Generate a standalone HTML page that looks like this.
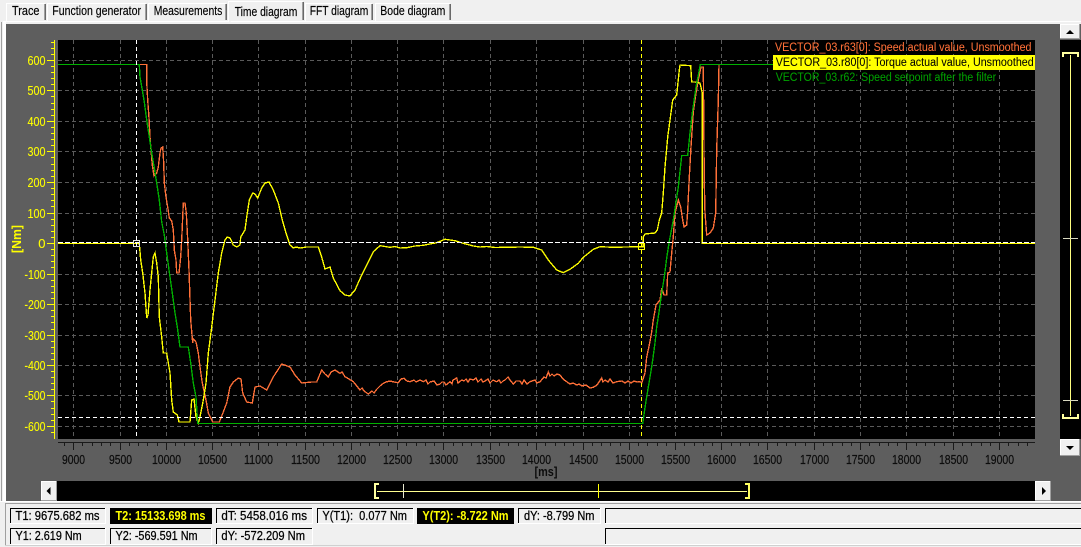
<!DOCTYPE html>
<html><head><meta charset="utf-8"><title>Time diagram</title>
<style>
html,body{margin:0;padding:0;background:#f0f0f0;overflow:hidden}
svg{display:block;font-family:"Liberation Sans",sans-serif}
text{font-size:12.5px;fill:#000;stroke:#000;stroke-width:.15}
.yl{fill:#ffff00;stroke:#ffff00;stroke-width:.1;text-anchor:end;font-size:13px}
.xl{fill:#0c0c0c;stroke:#0c0c0c;stroke-width:.2;text-anchor:middle;font-size:12.5px}
.st{fill:#000;stroke:#000;stroke-width:.25;font-size:12.5px}
.sy{fill:#ffff00;stroke:none;font-size:12.5px;font-weight:bold}
.lg{font-size:11.5px;stroke-width:.05}
</style></head><body>
<svg width="1081" height="547" viewBox="0 0 1081 547" xmlns="http://www.w3.org/2000/svg">
<rect width="1081" height="547" fill="#f0f0f0"/>
<!-- pane frame -->
<rect x="3" y="21" width="1078" height="1" fill="#ffffff"/>
<rect x="1" y="22" width="1" height="480" fill="#a0a0a0"/>
<rect x="3" y="22" width="3" height="480" fill="#ffffff"/>
<!-- tabs -->
<g shape-rendering="crispEdges">
<path d="M6.5 21V3.5H45" fill="#f0f0f0" stroke="#ffffff"/><path d="M44.5 4V20" stroke="#a0a0a0"/><path d="M45.5 4V20" stroke="#696969"/>
<path d="M47.5 21V3.5H146" fill="#f0f0f0" stroke="#ffffff"/><path d="M145.5 4V20" stroke="#a0a0a0"/><path d="M146.5 4V20" stroke="#696969"/>
<path d="M148.5 21V3.5H226" fill="#f0f0f0" stroke="#ffffff"/><path d="M225.5 4V20" stroke="#a0a0a0"/><path d="M226.5 4V20" stroke="#696969"/>
<path d="M305.5 21V3.5H372" fill="#f0f0f0" stroke="#ffffff"/><path d="M371.5 4V20" stroke="#a0a0a0"/><path d="M372.5 4V20" stroke="#696969"/>
<path d="M375.5 21V3.5H450" fill="#f0f0f0" stroke="#ffffff"/><path d="M449.5 4V20" stroke="#a0a0a0"/><path d="M450.5 4V20" stroke="#696969"/>
<path d="M228.5 22V1.5H303" fill="#f0f0f0" stroke="#ffffff"/><path d="M302.5 2V20" stroke="#a0a0a0"/><path d="M303.5 2V20" stroke="#696969"/>
</g>
<g>
<text x="12" y="15" textLength="27.5" lengthAdjust="spacingAndGlyphs">Trace</text>
<text x="52.3" y="15" textLength="88.7" lengthAdjust="spacingAndGlyphs">Function generator</text>
<text x="153.7" y="15" textLength="68.6" lengthAdjust="spacingAndGlyphs">Measurements</text>
<text x="234.7" y="16" textLength="62.6" lengthAdjust="spacingAndGlyphs">Time diagram</text>
<text x="309.7" y="15" textLength="58.6" lengthAdjust="spacingAndGlyphs">FFT diagram</text>
<text x="380.3" y="15" textLength="65" lengthAdjust="spacingAndGlyphs">Bode diagram</text>
</g>
<!-- gray panel -->
<rect x="6" y="24" width="1075" height="477" fill="#5e5e5e"/>
<!-- plot -->
<rect x="58" y="40" width="977" height="399" fill="#000"/>
<!-- grid -->
<g stroke="#5a5a5a" stroke-width="1" stroke-dasharray="4 3" shape-rendering="crispEdges" fill="none">
<path d="M58 60.5H1035M58 90.5H1035M58 121.5H1035M58 151.5H1035M58 182.5H1035M58 213.5H1035M58 274.5H1035M58 304.5H1035M58 335.5H1035M58 365.5H1035M58 395.5H1035M58 426.5H1035"/>
<path d="M73.5 40V439M120.5 40V439M166.5 40V439M212.5 40V439M258.5 40V439M305.5 40V439M351.5 40V439M397.5 40V439M443.5 40V439M490.5 40V439M536.5 40V439M583.5 40V439M629.5 40V439M675.5 40V439M721.5 40V439M767.5 40V439M814.5 40V439M860.5 40V439M906.5 40V439M953.5 40V439M999.5 40V439"/>
</g>
<!-- y axis -->
<path d="M54.5 40V439" stroke="#ffff00" shape-rendering="crispEdges"/>
<path d="M47 60.5H54M47 90.5H54M47 121.5H54M47 151.5H54M47 182.5H54M47 213.5H54M47 243.5H54M47 274.5H54M47 304.5H54M47 335.5H54M47 365.5H54M47 395.5H54M47 426.5H54" stroke="#ffff00" shape-rendering="crispEdges"/>
<path d="M51 42.5H54M51 48.5H54M51 54.5H54M51 66.5H54M51 72.5H54M51 78.5H54M51 84.5H54M51 96.5H54M51 103.5H54M51 109.5H54M51 115.5H54M51 127.5H54M51 133.5H54M51 139.5H54M51 145.5H54M51 157.5H54M51 164.5H54M51 170.5H54M51 176.5H54M51 188.5H54M51 194.5H54M51 200.5H54M51 206.5H54M51 219.5H54M51 225.5H54M51 231.5H54M51 237.5H54M51 249.5H54M51 255.5H54M51 261.5H54M51 267.5H54M51 280.5H54M51 286.5H54M51 292.5H54M51 298.5H54M51 310.5H54M51 316.5H54M51 322.5H54M51 329.5H54M51 341.5H54M51 347.5H54M51 353.5H54M51 359.5H54M51 371.5H54M51 377.5H54M51 383.5H54M51 389.5H54M51 401.5H54M51 408.5H54M51 414.5H54M51 420.5H54M51 432.5H54" stroke="#ffff00" shape-rendering="crispEdges"/>
<g>
<text class="yl" x="45.5" y="65" textLength="18" lengthAdjust="spacingAndGlyphs">600</text>
<text class="yl" x="45.5" y="95" textLength="18" lengthAdjust="spacingAndGlyphs">500</text>
<text class="yl" x="45.5" y="126" textLength="18" lengthAdjust="spacingAndGlyphs">400</text>
<text class="yl" x="45.5" y="156" textLength="18" lengthAdjust="spacingAndGlyphs">300</text>
<text class="yl" x="45.5" y="187" textLength="18" lengthAdjust="spacingAndGlyphs">200</text>
<text class="yl" x="45.5" y="218" textLength="18" lengthAdjust="spacingAndGlyphs">100</text>
<text class="yl" x="45.5" y="248">0</text>
<text class="yl" x="45.5" y="279" textLength="21" lengthAdjust="spacingAndGlyphs">-100</text>
<text class="yl" x="45.5" y="309" textLength="21" lengthAdjust="spacingAndGlyphs">-200</text>
<text class="yl" x="45.5" y="340" textLength="21" lengthAdjust="spacingAndGlyphs">-300</text>
<text class="yl" x="45.5" y="370" textLength="21" lengthAdjust="spacingAndGlyphs">-400</text>
<text class="yl" x="45.5" y="400" textLength="21" lengthAdjust="spacingAndGlyphs">-500</text>
<text class="yl" x="45.5" y="431" textLength="21" lengthAdjust="spacingAndGlyphs">-600</text>
<text transform="translate(21 253) rotate(-90)" style="fill:#ffff00;stroke:none;font-weight:bold;font-size:13px" textLength="28" lengthAdjust="spacingAndGlyphs">[Nm]</text>
</g>
<!-- x axis -->
<path d="M58 442.5H1035" stroke="#1a1a1a" stroke-width="1.4" shape-rendering="crispEdges"/>
<path d="M73.5 443V450M120.5 443V450M166.5 443V450M212.5 443V450M258.5 443V450M305.5 443V450M351.5 443V450M397.5 443V450M443.5 443V450M490.5 443V450M536.5 443V450M583.5 443V450M629.5 443V450M675.5 443V450M721.5 443V450M767.5 443V450M814.5 443V450M860.5 443V450M906.5 443V450M953.5 443V450M999.5 443V450" stroke="#1a1a1a" shape-rendering="crispEdges"/>
<path d="M64.5 443V446M82.5 443V446M92.5 443V446M101.5 443V446M110.5 443V446M129.5 443V446M138.5 443V446M147.5 443V446M157.5 443V446M175.5 443V446M184.5 443V446M194.5 443V446M203.5 443V446M221.5 443V446M231.5 443V446M240.5 443V446M249.5 443V446M268.5 443V446M277.5 443V446M286.5 443V446M296.5 443V446M314.5 443V446M323.5 443V446M333.5 443V446M342.5 443V446M360.5 443V446M369.5 443V446M379.5 443V446M388.5 443V446M406.5 443V446M416.5 443V446M425.5 443V446M434.5 443V446M453.5 443V446M462.5 443V446M471.5 443V446M481.5 443V446M499.5 443V446M508.5 443V446M518.5 443V446M527.5 443V446M545.5 443V446M555.5 443V446M564.5 443V446M573.5 443V446M592.5 443V446M601.5 443V446M610.5 443V446M620.5 443V446M638.5 443V446M647.5 443V446M657.5 443V446M666.5 443V446M684.5 443V446M694.5 443V446M703.5 443V446M712.5 443V446M731.5 443V446M740.5 443V446M749.5 443V446M758.5 443V446M777.5 443V446M786.5 443V446M795.5 443V446M805.5 443V446M823.5 443V446M832.5 443V446M842.5 443V446M851.5 443V446M869.5 443V446M879.5 443V446M888.5 443V446M897.5 443V446M916.5 443V446M925.5 443V446M934.5 443V446M944.5 443V446M962.5 443V446M971.5 443V446M981.5 443V446M990.5 443V446M1008.5 443V446M1018.5 443V446M1027.5 443V446" stroke="#1a1a1a" shape-rendering="crispEdges"/>
<g>
<text class="xl" x="73.5" y="464" textLength="23" lengthAdjust="spacingAndGlyphs">9000</text>
<text class="xl" x="120.5" y="464" textLength="23" lengthAdjust="spacingAndGlyphs">9500</text>
<text class="xl" x="166.5" y="464" textLength="29" lengthAdjust="spacingAndGlyphs">10000</text>
<text class="xl" x="212.5" y="464" textLength="29" lengthAdjust="spacingAndGlyphs">10500</text>
<text class="xl" x="258.5" y="464" textLength="29" lengthAdjust="spacingAndGlyphs">11000</text>
<text class="xl" x="305.5" y="464" textLength="29" lengthAdjust="spacingAndGlyphs">11500</text>
<text class="xl" x="351.5" y="464" textLength="29" lengthAdjust="spacingAndGlyphs">12000</text>
<text class="xl" x="397.5" y="464" textLength="29" lengthAdjust="spacingAndGlyphs">12500</text>
<text class="xl" x="443.5" y="464" textLength="29" lengthAdjust="spacingAndGlyphs">13000</text>
<text class="xl" x="490.5" y="464" textLength="29" lengthAdjust="spacingAndGlyphs">13500</text>
<text class="xl" x="536.5" y="464" textLength="29" lengthAdjust="spacingAndGlyphs">14000</text>
<text class="xl" x="583.5" y="464" textLength="29" lengthAdjust="spacingAndGlyphs">14500</text>
<text class="xl" x="629.5" y="464" textLength="29" lengthAdjust="spacingAndGlyphs">15000</text>
<text class="xl" x="675.5" y="464" textLength="29" lengthAdjust="spacingAndGlyphs">15500</text>
<text class="xl" x="721.5" y="464" textLength="29" lengthAdjust="spacingAndGlyphs">16000</text>
<text class="xl" x="767.5" y="464" textLength="29" lengthAdjust="spacingAndGlyphs">16500</text>
<text class="xl" x="814.5" y="464" textLength="29" lengthAdjust="spacingAndGlyphs">17000</text>
<text class="xl" x="860.5" y="464" textLength="29" lengthAdjust="spacingAndGlyphs">17500</text>
<text class="xl" x="906.5" y="464" textLength="29" lengthAdjust="spacingAndGlyphs">18000</text>
<text class="xl" x="953.5" y="464" textLength="29" lengthAdjust="spacingAndGlyphs">18500</text>
<text class="xl" x="999.5" y="464" textLength="29" lengthAdjust="spacingAndGlyphs">19000</text>
<text class="xl" x="546" y="476" style="font-weight:bold;stroke:none" textLength="23" lengthAdjust="spacingAndGlyphs">[ms]</text>
</g>
<!-- traces -->
<g fill="none" stroke-width="1.35" stroke-linejoin="miter" shape-rendering="crispEdges">
<polyline stroke="#ff7038" points="139,64.5 146.7,64.5 146.7,82 147.7,100 149,118 150,137 151,150 152.3,165 154,176 156.7,173 158.3,167 160,153 161,148 162.7,147 163.7,163 164.3,183 166,197 167.7,207 169.3,218 171.7,221 173.3,230 174.3,250 176,260 176.7,273 179,273 180.7,257 181.7,240 183.3,203 185,203 186.3,213 187.7,240 189,270 190.7,320 192.7,343 193.3,339 196,342 198.3,353 200,367 202.3,383 206,400 208.3,413 212.7,422 219.3,422 223.3,412 226.7,403 230,387 233.3,382 238.3,378 241,379 242.7,393 246.7,402 252.3,403 255,387 260,386 266.7,390 273.3,377 281.7,364 290,367 295,375 301.7,383 311.7,382 316.7,382 321.7,370 325,374 328.3,377 331,372 335,370 340,373.3 342,372 345,376.7 349,379 353.3,381.7 356,385 360,390 362,388 364,391 368.3,394 372,391 374,393 376.7,389.3 380,386 383.3,383.3 386,382 390,381 394,382 398.3,382.7 401,379 404,378.3 407,381 410,381.7 414,380 416,382 420,380 423.3,381.7 426,380 428,384 430,382 434,381 437,385 440,384 442,382 444,382 446,385 450,381.7 452,384 453,380 456.7,378 458,383 461.7,380 464,381 466,379 468,382 470,379 473.3,380 476,378 478,382 481,379 483,382 485,381 488,379 490,383 493,380 496.7,381.7 499,380 501,383 503,381 505,380 508,377 510,380 513.3,384 516,381 520,381 522,384 524,380 527,384 530,381.7 535,380 537,383 540,381.7 544,377 546,378 548.3,372 550,376 552,374 554,376 557,374 560,375 563,379 566.7,381.7 570,384 573,383 576.7,385 579,384 582,386 586,385 590,388 593.3,387.3 597,385 601.7,378 603,382 605,380 608,382 610,379 613,383 616.7,381.7 622,381 625,383 628,381 631,383 634,381 637,382 640,381.7 641.7,383 645,373 646.7,357 649.3,345 651.7,332 653.3,320 656,305 660,300 661.7,288 664,295 666.7,295 667.7,273 670,272 671.7,253 673.3,237 675,213 678.3,200 680.7,207 682.7,220 684,227 686.7,225 687.7,210 689.3,177 691,147 693.3,112 696,93 698.3,80 701,67 703.3,67 704.3,183 705,213 706.7,235 710,233 713.3,228 715.7,213 716.7,150 718.3,100 719,65"/>
<polyline stroke="#ffff00" points="58,243.5 137,243.5 139.3,243.5 140.7,260 142.7,273 145,293 146.7,318 148,315 150,290 151.7,273 153.3,257 155,253 156.7,263 158.3,277 159.3,317 161.7,337 163.3,353 166.7,353 170,373 171.7,400 173.3,412 177.3,415 179,422 190,422 191.7,400 194,399 196,417 198.3,423 200,417 203.3,400 206,383 208.3,353 211.7,327 215,300 218.3,273 221.7,253 225,240 227.3,237 230,238 233.3,245 236.7,247 240,245 240.7,237 245,230 246.7,217 249.3,200 252.7,193 255,194 257.7,198 261.7,188 265,183 269,182 273.3,190 278.3,203 282.3,220 285.7,232 290,245 293.3,248 296,247 300,248 306.7,247 318.3,247 321.7,257 325,269 330,267 333.3,278 340,290.7 345,295 350,296 355,290 361.7,275 368.3,261.7 373.3,251.7 380,245.7 390,247.3 395,246.5 400,248 406.7,247.7 415,246 423.3,245.3 436.7,242.7 445,239.3 455,240.7 463.3,243.3 473.3,246 480,247 486.7,246.5 495,247.5 506.7,247.3 520,247 533.3,247.3 541.7,250 548.3,260 556.7,270 563.3,272.7 570,269.3 578.3,263.3 583.3,257.3 593.3,249.3 600,246.7 613.3,247.3 638.3,246.7 643.3,246.7 643.3,237 645,234 655,233 657.3,230 659.3,220 661.7,213 663.3,193 665,167 667.7,137 670,120 672.7,100 676.7,95 679.3,70 680,65 690.7,65.7 691.7,82 695,82 700,83 702.3,93 702.3,243.5 1035,243.5"/>
<polyline stroke="#00b000" points="58,64.5 139.3,64.5 140,77 142.3,90 144.3,102 146.7,120 149.3,137 151.7,153 154.3,168 156.7,183 159.3,200 161.7,222 164.3,235 166.7,253 170,277 172.3,293 175,313 177.3,327 180,347 188.3,347 190.7,363 193.3,383 196,397 197.7,423.5 642.7,423.5 645.7,403 648.3,387 650.7,373 652.7,360 655,343 656.7,327 659.3,310 661.7,293 664.3,277 666.7,258 669,243 673.3,220 678.3,187 681.7,155.5 687.7,155.5 690,133 692.7,110 696,87 699.3,70 700.3,64.5 1035,64.5"/>
</g>
<!-- cursors -->
<g fill="none" shape-rendering="crispEdges">
<path d="M136.5 40V439" stroke="#ffffff" stroke-dasharray="4 3"/>
<path d="M641.5 40V439" stroke="#ffff00" stroke-dasharray="4 3"/>
<path d="M58 242.5H1035" stroke="#ffffff" stroke-dasharray="5 2"/>
<path d="M58 417.5H1035" stroke="#ffffff" stroke-dasharray="4 3"/>
<rect x="133.5" y="240.5" width="6" height="6" stroke="#e0e0e0"/>
<rect x="638.5" y="243.5" width="6" height="6" stroke="#ffff00"/>
</g>
<!-- legend -->
<text class="lg" x="775" y="51" style="fill:#ff7038;stroke:#ff7038" textLength="256.5" lengthAdjust="spacingAndGlyphs">VECTOR_03.r63[0]: Speed actual value, Unsmoothed</text>
<rect x="773" y="55" width="262" height="15" fill="#ffff00"/>
<text class="lg" x="775.7" y="66" style="fill:#000;stroke:#000" textLength="258" lengthAdjust="spacingAndGlyphs">VECTOR_03.r80[0]: Torque actual value, Unsmoothed</text>
<text class="lg" x="775.7" y="81" style="fill:#00a000;stroke:#00a000" textLength="220.5" lengthAdjust="spacingAndGlyphs">VECTOR_03.r62: Speed setpoint after the filter</text>
<!-- vertical scrollbar -->
<rect x="1060" y="40" width="21" height="399" fill="#000"/>
<g shape-rendering="crispEdges">
<rect x="1060" y="24" width="20" height="15" fill="#f0f0f0"/>
<path d="M1060 24.5H1080M1060.5 24V39" stroke="#fff"/><path d="M1060 38.5H1080M1079.5 24V39" stroke="#a0a0a0"/>
<path d="M1066 34L1070 30L1074 34Z" fill="#000" shape-rendering="auto"/>
<rect x="1060" y="439" width="20" height="17" fill="#f0f0f0"/>
<path d="M1060 439.5H1080M1060.5 439V456" stroke="#fff"/><path d="M1060 455.5H1080M1079.5 439V456" stroke="#a0a0a0"/>
<path d="M1066 446L1070 450L1074 446Z" fill="#000" shape-rendering="auto"/>
<path d="M1063 57V53H1078V57" fill="none" stroke="#ffffa0" stroke-width="2"/>
<path d="M1063 414V418H1078V414" fill="none" stroke="#ffffa0" stroke-width="2"/>
<path d="M1070.5 55V416" stroke="#ffff80"/>
<path d="M1063 238.5H1078M1063 400.5H1078" stroke="#d8d8c0"/>
</g>
<!-- horizontal scrollbar -->
<rect x="57" y="481" width="978" height="20" fill="#000"/>
<g shape-rendering="crispEdges">
<rect x="41" y="481" width="16" height="20" fill="#f0f0f0"/>
<path d="M41 481.5H57M41.5 481V501" stroke="#fff"/><path d="M41 500.5H57M56.5 481V501" stroke="#a0a0a0"/>
<path d="M50.5 487L46.5 491L50.5 495Z" fill="#000" shape-rendering="auto"/>
<rect x="1035" y="481" width="16" height="20" fill="#f0f0f0"/>
<path d="M1035 481.5H1051M1035.5 481V501" stroke="#fff"/><path d="M1035 500.5H1051M1050.5 481V501" stroke="#a0a0a0"/>
<path d="M1042 487L1046 491L1042 495Z" fill="#000" shape-rendering="auto"/>
<path d="M379 484H375V498H379" fill="none" stroke="#ffffa0" stroke-width="2"/>
<path d="M745 484H749V498H745" fill="none" stroke="#ffff60" stroke-width="2"/>
<path d="M377 491.5H747" stroke="#ffff90"/>
<path d="M403.5 484V498" stroke="#e8e8d0"/>
<path d="M598.5 484V498" stroke="#ffff00"/>
</g>
<!-- status bar -->
<rect x="0" y="501" width="1081" height="46" fill="#f0f0f0"/>
<g shape-rendering="crispEdges">
<rect x="0" y="501" width="1081" height="1" fill="#ffffff"/>
<rect x="5" y="503" width="1076" height="1" fill="#a0a0a0"/>
<rect x="5" y="503" width="1" height="42" fill="#a0a0a0"/>
<rect x="5" y="545" width="1076" height="1" fill="#d0d0d0"/>
</g>
<g fill="none" shape-rendering="crispEdges">
<path d="M10.5 523V508.5H105" stroke="#000"/><path d="M10 523.5H105.5V508" stroke="#fff"/>
<rect x="110" y="508" width="102" height="16" fill="#000"/>
<path d="M216.5 523V508.5H312" stroke="#000"/><path d="M216 523.5H312.5V508" stroke="#fff"/>
<path d="M317.5 523V508.5H413" stroke="#000"/><path d="M317 523.5H413.5V508" stroke="#fff"/>
<rect x="417" y="508" width="97" height="16" fill="#000"/>
<path d="M518.5 523V508.5H600" stroke="#000"/><path d="M518 523.5H600.5V508" stroke="#fff"/>
<path d="M605.5 523V508.5H1081" stroke="#000"/><path d="M605 523.5H1081" stroke="#fff"/>
<path d="M10.5 544V528.5H105" stroke="#000"/><path d="M10 544.5H105.5V528" stroke="#fff"/>
<path d="M110.5 544V528.5H211" stroke="#000"/><path d="M110 544.5H211.5V528" stroke="#fff"/>
<path d="M216.5 544V528.5H312" stroke="#000"/><path d="M216 544.5H312.5V528" stroke="#fff"/>
<path d="M605.5 544V528.5H1081" stroke="#000"/><path d="M605 544.5H1081" stroke="#fff"/>
</g>
<text class="st" x="15.5" y="520" textLength="84" lengthAdjust="spacingAndGlyphs">T1: 9675.682 ms</text>
<text class="sy" x="115.5" y="520" textLength="90" lengthAdjust="spacingAndGlyphs">T2: 15133.698 ms</text>
<text class="st" x="221.4" y="520" textLength="85.6" lengthAdjust="spacingAndGlyphs">dT: 5458.016 ms</text>
<text class="st" x="322.4" y="520" textLength="84.6" lengthAdjust="spacingAndGlyphs" xml:space="preserve">Y(T1):  0.077 Nm</text>
<text class="sy" x="422.4" y="520" textLength="86.2" lengthAdjust="spacingAndGlyphs">Y(T2): -8.722 Nm</text>
<text class="st" x="524" y="520" textLength="70.5" lengthAdjust="spacingAndGlyphs">dY: -8.799 Nm</text>
<text class="st" x="15.5" y="540" textLength="66.2" lengthAdjust="spacingAndGlyphs">Y1: 2.619 Nm</text>
<text class="st" x="115.5" y="540" textLength="82.1" lengthAdjust="spacingAndGlyphs">Y2: -569.591 Nm</text>
<text class="st" x="221.4" y="540" textLength="83.6" lengthAdjust="spacingAndGlyphs">dY: -572.209 Nm</text>
</svg>
</body></html>
